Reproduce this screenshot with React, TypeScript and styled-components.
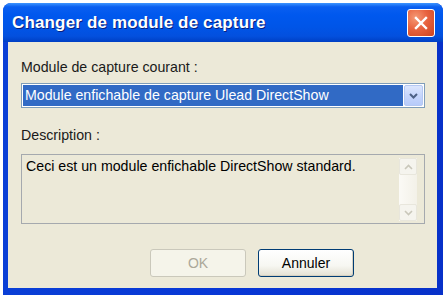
import styled, { createGlobalStyle } from 'styled-components';

const GlobalStyle = createGlobalStyle`
  html, body {
    margin: 0;
    padding: 0;
    background: #ffffff;
  }
  body {
    padding: 3px 0 0 3px;
    font-family: "Liberation Sans", Arial, sans-serif;
  }
`

const Window = styled.div`
  width: 440px;
  height: 292px;
  display: flex;
  flex-direction: column;
  border-radius: 8px 8px 0 0;
  background: linear-gradient(to right, #0a3fd6 0%, #0837d6 50%, #0731c9 100%);
  overflow: hidden;
`

const TitleBar = styled.div`
  height: 39px;
  flex: none;
  display: flex;
  align-items: center;
  justify-content: space-between;
  padding: 0 8px 0 9px;
  background: linear-gradient(to bottom, #3d95ff 0%, #0a5ff0 10%, #0058ee 30%, #0055e8 60%, #0350de 85%, #003fc4 100%);
`

const Title = styled.span`
  color: #ffffff;
  font-family: "Liberation Sans", Arial, sans-serif;
  font-weight: bold;
  font-size: 17px;
  letter-spacing: 0.15px;
  text-shadow: 1px 1px 0 #0a1f7d;
`

const CloseButton = styled.div`
  width: 26px;
  height: 26px;
  border: 1px solid #ffffff;
  border-radius: 3px;
  display: flex;
  align-items: center;
  justify-content: center;
  background: radial-gradient(circle at 30% 30%, #f59a76 0%, #e8633f 45%, #cc4320 100%);
  margin-top: 1px;
`

const Body = styled.div`
  flex: 1;
  margin: 0 6px 7px 5px;
  background: #ece9d8;
  padding: 17px 12px 0 13px;
  display: flex;
  flex-direction: column;
  font-size: 14.2px;
  color: #000000;
`

const Label = styled.div<{ $top?: number }>`
  line-height: 17px;
  height: 17px;
  margin-top: ${p => p.$top ?? 0}px;
  color: #1a1a1a;
`

const Combo = styled.div`
  margin-top: 7px;
  height: 25px;
  border: 1px solid #7f9db9;
  background: #ffffff;
  box-sizing: border-box;
  display: flex;
  align-items: stretch;
  padding: 1px;
`

const Selected = styled.div`
  flex: 1;
  background: #316ac5;
  color: #ffffff;
  line-height: 21px;
  padding-left: 2px;
  margin-right: 1px;
`

const DropButton = styled.div`
  width: 19px;
  border: 1px solid #b5c8f3;
  border-radius: 2px;
  box-sizing: border-box;
  background: linear-gradient(to bottom, #dce6fd 0%, #c6d6fc 50%, #b7cbfa 100%);
  display: flex;
  align-items: center;
  justify-content: center;
`

const DescBox = styled.div`
  margin-top: 10px;
  height: 70px;
  box-sizing: border-box;
  border: 1px solid #a5a9ae;
  background: #ece9d8;
  display: flex;
  padding: 3px 7px 2px 4px;
`

const DescText = styled.div`
  flex: 1;
  line-height: 17px;
`

const ScrollBar = styled.div`
  width: 18px;
  display: flex;
  flex-direction: column;
  justify-content: space-between;
  background: linear-gradient(to right, #fbfaf6 0%, #f3f1e8 100%);
`

const ScrollArrow = styled.div`
  height: 17px;
  border: 1px solid #e8e6dc;
  border-radius: 2px;
  box-sizing: border-box;
  background: #f5f4ee;
  display: flex;
  align-items: center;
  justify-content: center;
`

const ButtonRow = styled.div`
  margin-top: 25px;
  display: flex;
  gap: 12px;
  padding-left: 129px;
`

const Button = styled.div<{ $disabled?: boolean }>`
  width: 96px;
  height: 28px;
  box-sizing: border-box;
  border-radius: 3px;
  border: 1px solid ${p => (p.$disabled ? '#cac8bb' : '#003c74')};
  background: ${p =>
    p.$disabled
      ? '#f5f4ea'
      : 'linear-gradient(to bottom, #ffffff 0%, #f7f7f2 60%, #e3e0d2 100%)'};
  color: ${p => (p.$disabled ? '#aca899' : '#000000')};
  display: flex;
  align-items: center;
  justify-content: center;
  font-size: 14px;
  box-shadow: ${p => (p.$disabled ? 'none' : 'inset -1px -1px 0 #d6d0c0')};
`

export default function App() {
  return (
    <>
      <GlobalStyle />
      <Window>
        <TitleBar>
          <Title>Changer de module de capture</Title>
          <CloseButton>
            <svg width="16" height="16" viewBox="0 0 16 16">
              <path d="M3 3 L13 13 M13 3 L3 13" stroke="#ffffff" strokeWidth="2.4" strokeLinecap="square" />
            </svg>
          </CloseButton>
        </TitleBar>
        <Body>
          <Label>Module de capture courant :</Label>
          <Combo>
            <Selected>Module enfichable de capture Ulead DirectShow</Selected>
            <DropButton>
              <svg width="9" height="6" viewBox="0 0 9 6">
                <path d="M1 1 L4.5 4.5 L8 1" stroke="#4d6185" strokeWidth="2" fill="none" />
              </svg>
            </DropButton>
          </Combo>
          <Label $top={19}>Description :</Label>
          <DescBox>
            <DescText>Ceci est un module enfichable DirectShow standard.</DescText>
            <ScrollBar>
              <ScrollArrow>
                <svg width="9" height="6" viewBox="0 0 9 6">
                  <path d="M1 5 L4.5 1.5 L8 5" stroke="#c9c7ba" strokeWidth="1.6" fill="none" />
                </svg>
              </ScrollArrow>
              <ScrollArrow>
                <svg width="9" height="6" viewBox="0 0 9 6">
                  <path d="M1 1 L4.5 4.5 L8 1" stroke="#c9c7ba" strokeWidth="1.6" fill="none" />
                </svg>
              </ScrollArrow>
            </ScrollBar>
          </DescBox>
          <ButtonRow>
            <Button $disabled>OK</Button>
            <Button>Annuler</Button>
          </ButtonRow>
        </Body>
      </Window>
    </>
  );
}
